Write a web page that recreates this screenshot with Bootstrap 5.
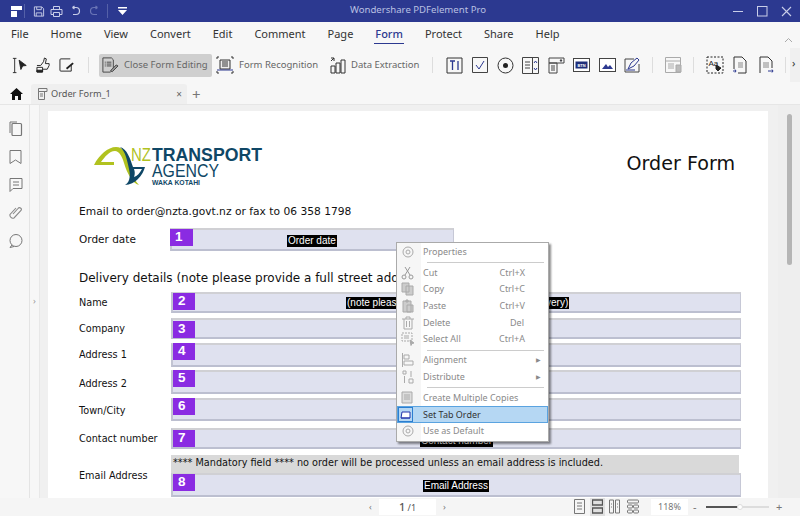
<!DOCTYPE html>
<html lang="en"><head><meta charset="utf-8"><title>Wondershare PDFelement Pro</title>
<link href="https://cdn.jsdelivr.net/npm/bootstrap@5.3.0/dist/css/bootstrap.min.css" rel="stylesheet">
<style>
html,body{margin:0;height:516px;overflow:hidden;background:#f5f5f5}
body{font-family:"Noto Sans","Open Sans",sans-serif;color:#333}
.app{width:800px;height:516px;position:relative;overflow:hidden}
.m4{margin-left:4px}.m5{margin-left:5px}.m8{margin-left:8px}.m9{margin-left:9px}.m10{margin-left:10px}.m11{margin-left:11px}.m12{margin-left:12px}.m13{margin-left:13px}
.titlebar{height:22px;background:#2c3990;color:#b9c0e2;font-size:9.6px;position:relative}
.title-text{position:absolute;left:0;right:0;top:2px;text-align:center;line-height:16px;padding-left:36px}
.qa svg,.winbtns svg{display:block;flex:none}
.qa{padding-left:10px;height:22px}
.qa-sep{width:1px;height:14px;background:#5561a8;flex:none}
.winbtns{position:absolute;right:0;top:0;height:22px;gap:13px;padding-right:8px}
.menubar{height:26px;background:#f7f7f7;padding:3px 0 0 11px;font-size:11px;color:#333}
.menu-it{line-height:18px;height:19px;margin-right:22px;position:relative}
.menu-it.on{color:#2c3990;font-weight:500}
.menu-it.on::after{content:"";position:absolute;left:-1px;right:-1px;bottom:0;height:1px;background:#2c3990}
.toolbar{height:34px;background:#f7f7f7;padding-left:12px;position:relative;font-size:9.5px;color:#555}
.toolbar svg{flex:none}
.tsep{width:1px;height:16px;background:#ddd;flex:none}
.closebtn{height:23px;width:113px;background:#cfcfcf;border-radius:2px;padding-left:2px;color:#666;white-space:nowrap;flex:none}
.closebtn span{margin-left:5px}
.tool-lbl{white-space:nowrap;color:#666;flex:none}
.w79{width:79px}.w69{width:69px}
.more-box{position:absolute;right:0;top:0;width:10px;height:34px;background:#f0f0f0;color:#333;font-size:11px;line-height:30px;padding-left:2px}
.collapse-up{position:absolute;right:7px;top:-11px}
.tabsbar{height:23px;background:#f7f7f7;position:relative;border-bottom:1px solid #e6e6e6}
.doctab{position:absolute;left:31px;top:2px;width:156px;height:20px;background:#efefef;border-radius:3px 3px 0 0;font-size:9.2px;color:#555;padding-left:7px;gap:3px}
.tab-x{position:absolute;right:5px;top:3px;font-size:10px;color:#666;line-height:14px}
.tab-plus{position:absolute;left:192px;top:4px;font-size:15px;line-height:16px;color:#777}
.home{position:absolute;left:10px;top:6px}
.workspace{height:393px;position:relative;background:#f0f0f0}
.sidepanel{width:30px;background:#f7f7f7;border-right:1px solid #e4e4e4;flex:none;padding:16px 0 0 9px;gap:14px}
.sidepanel svg{display:block}
.sideedge{width:10px;flex:none;background:#f7f7f7;border-right:1px solid #e8e8e8;color:#999;font-size:9px;position:relative}
.sideedge span{position:absolute;top:191px;left:3px;line-height:10px}
.canvas{flex:1;position:relative;overflow:hidden;padding:6px 0 0 8px}
.sheet{width:720px;height:387px;background:#fff;padding:0 27px 0 31px;font-family:"DejaVu Sans",sans-serif;color:#111;overflow:hidden}
.sheet-head{height:90px;padding-top:32px}
.logo{margin-left:15px;display:block;flex:none}
.order-title{font-size:19.1px;line-height:24px;margin-right:6px;margin-top:9px}
.intro{font-size:10.7px;line-height:16px;margin:3px 0 0;white-space:nowrap}
.row-date{margin-top:8px;height:23px}
.lab{font-size:9.7px;line-height:14px;width:92px;flex:none;white-space:nowrap}
.lab.lg{font-size:10.5px;width:91px;margin-bottom:1px}
.lab-dn{margin-top:3px}
.fieldbox{height:21px;background:#dfe1ef;border:1px solid #c6c8d6;border-top:2px solid #d0d0d4;border-left:2px solid #c2c4d2;border-bottom:2px solid #bcbfd0;position:relative;flex:1;min-width:0}
.fieldbox.short{flex:none;width:284px;height:23px}
.fieldbox.h23{height:23px}
.fieldbox.h24{height:24px}
.fieldbox.tall{height:24px;flex:none}
.numtag{position:absolute;left:0;top:0;width:22px;height:17px;background:#8a2be2;color:#fff;font:bold 13.500px/16px "Liberation Sans",sans-serif;padding-left:5px}
.short .numtag{left:-2px;width:23px;top:-1px}
.tg-up1{top:-1px}.tg-dn1{top:1px}.tg-up2{top:-2px}
.blackname{position:absolute;background:#000;color:#fff;font:10px/12px "Liberation Sans",sans-serif;padding:0 1px;white-space:nowrap}
.bn-date{left:115px;top:5px}.bn-name{left:173px;top:3px}.bn-contact{left:247px;top:5px}.bn-email{left:250px;top:5px}
.delivery{font-size:12px;line-height:18px;margin:18px 0 5px;white-space:nowrap}
.gap5{margin-top:5px}.gap3{margin-top:3px}.gap4{margin-top:4px}.gap7{margin-top:7px}
.mandatory{background:#d9d9d9;height:18px;font-size:9.7px;line-height:16px;padding-left:2px;white-space:nowrap;margin-right:2px}
.emailrow{margin-top:6px}
.vscroll{position:absolute;left:738px;top:0;bottom:0;width:22px;background:#eee}
.vthumb{position:absolute;left:747px;top:9px;width:5px;height:151px;background:#b5b5b5;border-radius:3px}
.ctx{position:absolute;left:396px;top:242px;width:153px;height:200px;background:#fff;border:1px solid #aaa;box-shadow:2px 2px 2px rgba(0,0,0,.45);font-size:9px;color:#8a8a8a;z-index:5;padding:1px 0}
.ctx-gut{position:absolute;left:0;top:0;bottom:0;width:24px;background:#f6f6f6}
.ctx-it{height:16.7px;line-height:16.7px;position:relative;padding-left:26px;white-space:nowrap}
.ctx-it svg{position:absolute;left:4px;top:1px}
.ctx-key{position:absolute;right:23px;top:0}
.ctx-key.del{right:24px}
.ctx-arr{position:absolute;right:7px;top:0;font-size:6px}
.ctx-sep{height:1px;background:#ccc;margin:1.500px 4px 1.500px 30px;position:relative}
.ctx-it.sel{background:#b5d7f3;border:1px solid #5aa3e0;color:#333;height:17px;line-height:15px;padding-left:25px}
.ctx-it.sel svg{left:0;top:0}
.statusbar{height:18px;background:#f5f5f5;position:relative;font-size:9px;color:#777}
.pagebox{position:absolute;left:379px;top:1px;width:57px;height:16px;background:#fff;text-align:center;line-height:16px;color:#555}
.pagebox b{font-size:11px;font-weight:500}
.zoombox{position:absolute;left:651px;top:1px;width:37px;height:16px;background:#fff;text-align:center;line-height:16px}
.stic{position:absolute;top:1px}
.s1{left:574px}.s2{left:592px}.s3{left:609px}.s4{left:627px}
.s-hi{position:absolute;left:590px;top:0;width:15px;height:18px;background:#e0e0e0}
.sliderline{position:absolute;left:706px;top:8px;width:63px;height:2px;background:#ddd}
.sliderfill{width:32px;height:2px;background:#555}
.sliderknob{position:absolute;left:737px;top:6px;width:6px;height:6px;border-radius:50%;background:#fff;border:1px solid #ddd}
.stxt{position:absolute;top:1px;line-height:16px}
.t-prev{left:369px}.t-next{left:443px}.t-minus{left:693px;font-size:11px}.t-plus{left:776px;font-size:11px}
</style></head><body>
<div class="app d-flex flex-column">
  <div class="titlebar">
    <div class="title-text">Wondershare PDFelement Pro</div>
    <div class="qa d-flex align-items-center position-relative">
      <svg width="14" height="13" viewBox="0 0 14 13"><path d="M1 1h11v4H1zM1 6h6v6H1z" fill="#fff"/></svg>
      <span class="qa-sep"></span>
      <svg class="m8" width="12" height="13" viewBox="0 0 13 13" fill="none" stroke="#c9cee8"><path d="M1.500 1.500h8l2 2v8h-10z"/><path d="M4 1.500v3h5v-3M3.500 11.500v-3.500h6v3.500"/></svg>
      <svg class="m5" width="13" height="13" viewBox="0 0 13 13" fill="none" stroke="#c9cee8"><path d="M3.500 4V1.500h6V4M3 9.500H1V4.500h11v5h-2"/><path d="M3.500 7.500h6v4h-6z"/></svg>
      <svg class="m8" width="10" height="12" viewBox="0 0 10 12" fill="none" stroke="#c9cee8" stroke-width="1.200"><path d="M1.500 2.500h3.500a3.500 3.500 0 0 1 0 7H2M1.500 2.500l2-1.500M1.500 2.500l2 1.500"/></svg>
      <svg class="m8" width="10" height="12" viewBox="0 0 10 12" fill="none" stroke="#6a75b6" stroke-width="1.200"><path d="M8.500 2.500H5a3.500 3.500 0 0 0 0 7h3M8.500 2.500l-2-1.500M8.500 2.500l-2 1.500"/></svg>
      <span class="qa-sep m8"></span>
      <svg class="m9" width="11" height="10" viewBox="0 0 11 10"><path d="M1 1h9v1.500H1zM1 4h9L5.500 9z" fill="#fff"/></svg>
    </div>
    <div class="winbtns d-flex align-items-center">
      <svg width="11" height="11" viewBox="0 0 11 11"><path d="M0 5.500h10" stroke="#c9cee8"/></svg>
      <svg width="11" height="11" viewBox="0 0 11 11" fill="none"><rect x=".5" y=".5" width="9.500" height="9.500" stroke="#c9cee8"/></svg>
      <svg width="11" height="11" viewBox="0 0 11 11"><path d="M1 1l9 9M10 1l-9 9" stroke="#c9cee8" stroke-width="1.100"/></svg>
    </div>
  </div>
  <div class="menubar d-flex">
    <span class="menu-it">File</span><span class="menu-it">Home</span><span class="menu-it">View</span><span class="menu-it">Convert</span><span class="menu-it">Edit</span><span class="menu-it">Comment</span><span class="menu-it">Page</span><span class="menu-it on">Form</span><span class="menu-it">Protect</span><span class="menu-it">Share</span><span class="menu-it">Help</span>
  </div>
  <div class="toolbar d-flex align-items-center">
    <svg width="16" height="17" viewBox="0 0 18 18" fill="none" stroke="#222"><path d="M1 1h4M3 1v16M1 17h4"/><path d="M8 3l8 6-4 .5-2 4z" fill="#222"/></svg>
    <svg class="m8" width="15" height="16" viewBox="0 0 16 17" fill="none" stroke="#222"><path d="M1 9h4l3-4 1-4 2 1-1 5h4v2l-2 4H5"/><path d="M1 11h6v5H1z" fill="#fff"/><path d="M1 14h6v2H1z" fill="#222"/></svg>
    <svg class="m8" width="16" height="16" viewBox="0 0 17 16" fill="none" stroke="#222"><path d="M12 1.500H2a1 1 0 0 0-1 1v11a1 1 0 0 0 1 1h11V8"/><path d="M8 12l7-6" stroke-width="2"/></svg>
    <span class="tsep m13"></span>
    <div class="closebtn m10 d-flex align-items-center">
      <svg width="18" height="18" viewBox="0 0 19 18" fill="none" stroke="#444"><path d="M2 1.500h9l2 2v10l-3 3H2z"/><path d="M4 6h1M4 8h1M4 10h1M6 6h5M6 8h5M6 10h5"/><path d="M10 15l6-6 2 1-6 6z" fill="#999"/></svg>
      <span>Close Form Editing</span>
    </div>
    <svg class="m4" width="18" height="18" viewBox="0 0 18 18" fill="none" stroke="#333"><path d="M1 3V1h2M15 1h2v2M1 15v2h2M17 15v2h-2"/><path d="M4 4h10v9H4z" fill="#eee"/><path d="M6 6h6M6 8h6M6 10h6"/><path d="M1 14h16" stroke="#2c3990"/></svg>
    <span class="tool-lbl w79 m5">Form Recognition</span>
    <svg class="m12" width="16" height="17" viewBox="0 0 16 17" fill="none" stroke="#333"><path d="M1 16V9h4v7zM6 16V6h4v10zM11 16V3h4v13zM1 4l3-3M1 1h3v3"/></svg>
    <span class="tool-lbl w69 m5">Data Extraction</span>
    <span class="tsep m12"></span>
    <svg class="m13" width="17" height="17" viewBox="0 0 17 17" fill="none" stroke="#333"><path d="M1 1h15v15H1z"/><path d="M4 4h5M6.500 4v9M12 4v9" stroke="#2c3990" stroke-width="1.300"/></svg>
    <svg class="m9" width="16" height="16" viewBox="0 0 16 16" fill="none" stroke="#444"><path d="M.5 .5h15v15H.5z"/><path d="M4 8l3 4 5-8" stroke="#2c3990"/></svg>
    <svg class="m9" width="17" height="17" viewBox="0 0 17 17" fill="none"><circle cx="8.500" cy="8.500" r="7.500" stroke="#333"/><circle cx="8.500" cy="8.500" r="2.500" fill="#222"/></svg>
    <svg class="m8" width="17" height="17" viewBox="0 0 17 17" fill="none" stroke="#444"><path d="M.5 .5h16v16H.5zM10.500 .5v16"/><path d="M3 5h5M3 8h5M3 11h5"/><path d="M12 6l1.500-2 1.500 2M12 11l1.500 2 1.500-2" stroke="#2c3990"/></svg>
    <svg class="m9" width="17" height="17" viewBox="0 0 17 17" fill="none" stroke="#444"><path d="M1 1h15v5H1z"/><path d="M1 6h8v10H1zM3 9h4M3 11h4M3 13h4"/><path d="M12 3h2l-1 1.500z" fill="#2c3990"/></svg>
    <svg class="m8" width="17" height="14" viewBox="0 0 17 14"><rect x=".5" y=".5" width="16" height="13" fill="#fff" stroke="#444"/><rect x="2.500" y="3.500" width="12" height="7" fill="#1f2f7a"/><text x="8.500" y="8.500" font-size="4" fill="#fff" text-anchor="middle" font-family="Liberation Sans,sans-serif" font-weight="700">BTN</text></svg>
    <svg class="m9" width="17" height="14" viewBox="0 0 17 14"><rect x=".5" y=".5" width="16" height="13" fill="#fff" stroke="#444"/><path d="M3 11l4-5 2 3 2-2 3 4z" fill="#2c3990"/></svg>
    <svg class="m8" width="17" height="16" viewBox="0 0 17 16" fill="none" stroke="#444"><path d="M10 2H1v13h14V7"/><path d="M4 12l3-6 6-5 2 2-5 6z" stroke="#2c3990"/><path d="M2 13h9" stroke="#2c3990"/></svg>
    <span class="tsep m11"></span>
    <svg class="m12" width="17" height="16" viewBox="0 0 17 16" fill="none" stroke="#aaa"><path d="M.5 .5h15v15H.5zM.5 4h15M3 7h6M3 9h6M3 11h6"/><path d="M11 8h5v7h-5z" fill="#bbb"/></svg>
    <span class="tsep m11"></span>
    <svg class="m12" width="18" height="18" viewBox="0 0 18 18" fill="none" stroke="#222"><path d="M1 1h16v16H1z" stroke-dasharray="2 1.500"/><text x="2.500" y="10" font-size="8" fill="#222" stroke="none" font-family="Liberation Sans,sans-serif">Aa</text><path d="M10 9l5 3-3 3-2-2z" fill="#222"/></svg>
    <svg class="m8" width="15" height="18" viewBox="0 0 15 18" fill="none" stroke="#333"><path d="M2 13V1h8l4 4v12H6"/><path d="M6 7h5M6 9h5M6 11h5" stroke="#888"/><path d="M1 15h3l-1-1.500M4 15l-1 1.500" stroke="#2c3990"/></svg>
    <svg class="m12" width="15" height="18" viewBox="0 0 15 18" fill="none" stroke="#333"><path d="M1 17V1h8l4 4v7"/><path d="M4 7h6M4 9h6M4 11h6" stroke="#888"/><path d="M9 15h5l-1-1.500M14 15l-1 1.500" stroke="#2c3990"/></svg>
    <span class="tsep m11"></span>
    <div class="more-box">›</div>
    <svg class="collapse-up" width="9" height="6" viewBox="0 0 9 6" fill="none" stroke="#aaa"><path d="M1 5l3.500-3.500L8 5"/></svg>
  </div>
  <div class="tabsbar">
    <svg class="home" width="13" height="12" viewBox="0 0 13 12"><path d="M6.500 0L13 6h-2v6H8V8H5v4H2V6H0z" fill="#111"/></svg>
    <div class="doctab d-flex align-items-center">
      <svg width="10" height="12" viewBox="0 0 10 12" fill="none" stroke="#777"><path d="M.5 .5h8.500v3H.5zM.5 3.500h6v8h-6zM2 6h3M2 8h3"/></svg>
      <span>Order Form_1</span><span class="tab-x">×</span>
    </div>
    <span class="tab-plus">+</span>
  </div>
  <div class="workspace d-flex">
    <div class="sidepanel d-flex flex-column">
      <svg width="14" height="15" viewBox="0 0 14 15" fill="none" stroke="#777"><path d="M1 12V1h7"/><rect x="3" y="2.500" width="9.500" height="12" rx="1" fill="#f7f7f7" stroke-width="1.200"/></svg>
      <svg width="13" height="14" viewBox="0 0 13 14" fill="none" stroke="#777"><path d="M1 .5h11v13l-5.500-3.500L1 13.500z"/></svg>
      <svg width="14" height="14" viewBox="0 0 14 14" fill="none" stroke="#777"><path d="M1 .5h12v10H4l-3 3zM4 4h6M4 7h6"/></svg>
      <svg width="14" height="14" viewBox="0 0 14 14" fill="none" stroke="#888" stroke-width="1.100"><path d="M4 8l5-5.500a1.700 1.700 0 0 1 3 2L5 12a3 3 0 0 1-4-3.500L7 2"/></svg>
      <svg width="14" height="14" viewBox="0 0 14 14" fill="none" stroke="#777"><circle cx="7" cy="6.500" r="6"/><path d="M3 11l-2 2.500 4-1"/></svg>
    </div>
    <div class="sideedge"><span>›</span></div>
    <div class="canvas">
      <div class="sheet">
        <div class="sheet-head d-flex justify-content-between">
          <svg class="logo" width="170" height="44" viewBox="0 -4 170 44">
            <path d="M0 18C5 8 14 0 22 0C29 0 32 6 34 13C36 22 39 32 45 38C38 36 33 26 30 16C28 9 25 4 21 4C15 4 11 10 7 15H20V18Z" fill="#b1c21f"/>
            <path d="M26 0C33 2 36 11 39 20H51C49 28 41 38 31 38C35 36 37 30 35 22C33 12 31 4 26 0Z" fill="#0f4766"/>
            <path d="M40 22H48C46 26 43 29 40 30C41 27 41 25 40 22Z" fill="#fff"/>
            <text x="37" y="14" font-family="Liberation Sans,sans-serif" font-size="18" fill="#b1c21f" textLength="20" lengthAdjust="spacingAndGlyphs">NZ</text>
            <text x="58" y="14" font-family="Liberation Sans,sans-serif" font-size="18" font-weight="700" fill="#0f4766" textLength="110" lengthAdjust="spacingAndGlyphs">TRANSPORT</text>
            <text x="58" y="30" font-family="Liberation Sans,sans-serif" font-size="19" fill="#0f4766" textLength="67" lengthAdjust="spacingAndGlyphs">AGENCY</text>
            <text x="58" y="38" font-family="Liberation Sans,sans-serif" font-size="6.500" font-weight="700" fill="#0f4766" textLength="48" lengthAdjust="spacingAndGlyphs">WAKA KOTAHI</text>
          </svg>
          <div class="order-title">Order Form</div>
        </div>
        <p class="intro">Email to order@nzta.govt.nz or fax to 06 358 1798</p>
        <div class="row-date d-flex align-items-center">
          <span class="lab lg">Order date</span>
          <div class="fieldbox short"><span class="numtag">1</span><span class="blackname bn-date">Order date</span></div>
        </div>
        <div class="delivery">Delivery details (note please provide a full street address)</div>
        <div class="d-flex align-items-center"><span class="lab">Name</span><div class="fieldbox"><span class="numtag tg-up1">2</span><span class="blackname bn-name">(note please provide a full street address delivery)</span></div></div>
        <div class="gap5 d-flex align-items-center"><span class="lab">Company</span><div class="fieldbox"><span class="numtag tg-dn1">3</span></div></div>
        <div class="gap4 d-flex align-items-center"><span class="lab">Address 1</span><div class="fieldbox h24"><span class="numtag tg-up2">4</span></div></div>
        <div class="gap3 d-flex align-items-center"><span class="lab lab-dn">Address 2</span><div class="fieldbox h24"><span class="numtag tg-up2">5</span></div></div>
        <div class="gap4 d-flex align-items-center"><span class="lab lab-dn">Town/City</span><div class="fieldbox h23"><span class="numtag tg-up2">6</span></div></div>
        <div class="gap7 d-flex align-items-center"><span class="lab">Contact number</span><div class="fieldbox"><span class="numtag">7</span><span class="blackname bn-contact">Contact number</span></div></div>
        <div class="emailrow d-flex align-items-center">
          <span class="lab">Email Address</span>
          <div class="flex-grow-1 d-flex flex-column">
            <div class="mandatory">**** Mandatory field **** no order will be processed unless an email address is included.</div>
            <div class="fieldbox tall"><span class="numtag tg-up1">8</span><span class="blackname bn-email">Email Address</span></div>
          </div>
        </div>
      </div>
      <div class="vscroll"></div><div class="vthumb"></div>
    </div>
  </div>
  <div class="statusbar">
    <span class="stxt t-prev">‹</span>
    <div class="pagebox"><b>1</b> /1</div>
    <span class="stxt t-next">›</span>
    <svg class="stic s1" width="11" height="15" viewBox="0 0 11 15" fill="none" stroke="#777"><path d="M.5 .5h10v14H.5zM3 4h5M3 7h5M3 10h5"/></svg>
    <div class="s-hi"></div>
    <svg class="stic s2" width="11" height="15" viewBox="0 0 11 15" fill="none" stroke="#555" stroke-width="1.300"><path d="M.5 1h10v5H.5zM.5 9h10v5H.5z"/></svg>
    <svg class="stic s3" width="11" height="15" viewBox="0 0 11 15" fill="none" stroke="#777"><path d="M.5 1h4v13h-4zM6.500 1h4v13h-4zM2 5h1M2 8h1M8 5h1M8 8h1"/></svg>
    <svg class="stic s4" width="12" height="15" viewBox="0 0 12 15" fill="none" stroke="#777"><rect x=".5" y="1" width="11" height="3" rx="1"/><rect x=".5" y="6" width="5" height="3" rx="1"/><rect x="6.500" y="6" width="5" height="3" rx="1"/><rect x=".5" y="11" width="5" height="3" rx="1"/><rect x="6.500" y="11" width="5" height="3" rx="1"/></svg>
    <div class="zoombox">118%</div>
    <span class="stxt t-minus">-</span>
    <div class="sliderline"><div class="sliderfill"></div></div><div class="sliderknob"></div>
    <span class="stxt t-plus">+</span>
  </div>
  <div class="ctx">
    <div class="ctx-gut"></div>
    <div class="ctx-it"><svg width="14" height="14" viewBox="0 0 14 14" fill="none" stroke="#aaa"><circle cx="7" cy="7" r="5"/><circle cx="7" cy="7" r="2"/></svg>Properties</div>
    <div class="ctx-sep"></div>
    <div class="ctx-it"><svg width="14" height="14" viewBox="0 0 14 14" fill="none" stroke="#999"><circle cx="3" cy="11" r="2"/><circle cx="10" cy="11" r="2"/><path d="M4 9l5-8M9 9L4 1"/></svg>Cut<span class="ctx-key">Ctrl+X</span></div>
    <div class="ctx-it"><svg width="14" height="14" viewBox="0 0 14 14" fill="#ccc" stroke="#aaa"><path d="M1 1h7v9H1zM5 4h7v9H5z"/></svg>Copy<span class="ctx-key">Ctrl+C</span></div>
    <div class="ctx-it"><svg width="14" height="14" viewBox="0 0 14 14" fill="#ccc" stroke="#aaa"><path d="M2 2h8v11H2zM5 1h2v2H5zM6 6h6v7H6z"/></svg>Paste<span class="ctx-key">Ctrl+V</span></div>
    <div class="ctx-it"><svg width="14" height="14" viewBox="0 0 14 14" fill="none" stroke="#aaa"><path d="M1 3h12M5 3V1h4v2M3 3v10h8V3M5.500 5v6M8.500 5v6"/></svg>Delete<span class="ctx-key del">Del</span></div>
    <div class="ctx-it"><svg width="14" height="14" viewBox="0 0 14 14" fill="none" stroke="#aaa"><path d="M1 1h10v8H1z" stroke-dasharray="2 1"/><path d="M3 4h5M3 6h5"/><path d="M9 8l4 3-2 .5-1 2z" fill="#aaa"/></svg>Select All<span class="ctx-key">Ctrl+A</span></div>
    <div class="ctx-sep"></div>
    <div class="ctx-it"><svg width="14" height="14" viewBox="0 0 14 14" fill="none" stroke="#aaa"><path d="M1.500 0v14M3 2h5v4H3zM3 8h9v4H3z"/></svg>Alignment<span class="ctx-arr">▶</span></div>
    <div class="ctx-it"><svg width="14" height="14" viewBox="0 0 14 14" fill="none" stroke="#aaa"><path d="M2 1h3v3H2zM8 9h4v4H8zM3.500 6v7M10 1v6"/></svg>Distribute<span class="ctx-arr">▶</span></div>
    <div class="ctx-sep"></div>
    <div class="ctx-it"><svg width="14" height="14" viewBox="0 0 14 14" fill="#ddd" stroke="#aaa"><path d="M1 1h10v11H1zM3 4h6M3 6h6M3 8h6"/></svg>Create Multiple Copies</div>
    <div class="ctx-it sel"><svg width="15" height="15" viewBox="0 0 15 15"><rect x=".5" y=".5" width="14" height="14" fill="#b5d7f3" stroke="#2c7ed0"/><path d="M3 11l1-6h8v6z" fill="#fff" stroke="#2233aa"/><path d="M3 11h9" stroke="#2233aa"/></svg>Set Tab Order</div>
    <div class="ctx-it"><svg width="14" height="14" viewBox="0 0 14 14" fill="none" stroke="#aaa"><circle cx="7" cy="7" r="5"/><circle cx="7" cy="7" r="2"/></svg>Use as Default</div>
  </div>
</div>
<script src="https://cdn.jsdelivr.net/npm/bootstrap@5.3.0/dist/js/bootstrap.bundle.min.js"></script>
</body></html>
